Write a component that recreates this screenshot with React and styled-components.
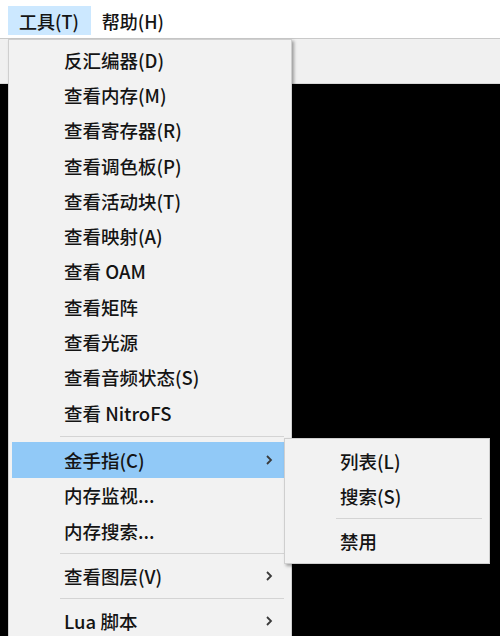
import React from 'react';
import styled, { createGlobalStyle } from 'styled-components';

const GlobalStyle = createGlobalStyle`
  html, body {
    margin: 0;
    padding: 0;
    background: #000;
  }
  * {
    box-sizing: border-box;
  }
`;

const mainItems = [
  { label: '反汇编器(D)' },
  { label: '查看内存(M)' },
  { label: '查看寄存器(R)' },
  { label: '查看调色板(P)' },
  { label: '查看活动块(T)' },
  { label: '查看映射(A)' },
  { label: '查看 OAM' },
  { label: '查看矩阵' },
  { label: '查看光源' },
  { label: '查看音频状态(S)' },
  { label: '查看 NitroFS' },
  { sep: true, first: true },
  { label: '金手指(C)', sub: true, active: true },
  { label: '内存监视...' },
  { label: '内存搜索...' },
  { sep: true },
  { label: '查看图层(V)', sub: true },
  { sep: true },
  { label: 'Lua 脚本', sub: true },
];

const subItems = [
  { label: '列表(L)' },
  { label: '搜索(S)' },
  { sep: true },
  { label: '禁用' },
];

const Chevron = () => (
  <svg width="8" height="12" viewBox="0 0 8 12">
    <polyline
      points="2,2 6,6 2,10"
      fill="none"
      stroke="#3a3a3a"
      strokeWidth="1.8"
    />
  </svg>
);

const App = () => {
  return (
    <>
      <GlobalStyle />
      <Screen>
        <MenuBar>
          <BarItem $open>工具(T)</BarItem>
          <BarItem>帮助(H)</BarItem>
        </MenuBar>
        <ToolStrip />
        <Canvas />

        <Menu $left={8} $top={39} $width={284} $pad={2}>
          {mainItems.map((item, i) =>
            item.sep ? (
              <Separator key={i} $height={item.first ? 12 : 10} />
            ) : (
              <Item key={i} $active={item.active}>
                <span>{item.label}</span>
                {item.sub && (
                  <Arrow>
                    <Chevron />
                  </Arrow>
                )}
              </Item>
            )
          )}
        </Menu>

        <Menu $left={284} $top={438} $width={206} $pad={4}>
          {subItems.map((item, i) =>
            item.sep ? (
              <Separator key={i} $height={10} />
            ) : (
              <Item key={i}>
                <span>{item.label}</span>
              </Item>
            )
          )}
        </Menu>
      </Screen>
    </>
  );
};

const Screen = styled.div`
  position: relative;
  width: 500px;
  height: 636px;
  overflow: hidden;
  display: flex;
  flex-direction: column;
  background: #000;
  font-family: 'Noto Sans CJK SC', 'Microsoft YaHei', sans-serif;
  font-weight: 500;
  color: #141414;
`;

const MenuBar = styled.div`
  height: 39px;
  flex-shrink: 0;
  background: #fff;
  display: flex;
  align-items: flex-start;
  padding: 6px 0 0 8px;
  border-bottom: 1px solid #c9c9c9;
`;

const BarItem = styled.div`
  height: 29px;
  display: flex;
  align-items: center;
  padding: 0 11px 0 10px;
  font-size: 18px;
  background: ${(p) => (p.$open ? '#cce8ff' : 'transparent')};
  border: 1px solid ${(p) => (p.$open ? '#cce8ff' : 'transparent')};
`;

const ToolStrip = styled.div`
  height: 45px;
  flex-shrink: 0;
  background: #f0f0f0;
  border-bottom: 1px solid #d8d8d8;
`;

const Canvas = styled.div`
  flex: 1;
  background: #000;
`;

const Menu = styled.div`
  position: absolute;
  left: ${(p) => p.$left}px;
  top: ${(p) => p.$top}px;
  width: ${(p) => p.$width}px;
  padding: ${(p) => p.$pad}px 3px;
  background: #f2f2f2;
  border: 1px solid #cfcfcf;
  box-shadow: 2px 2px 3px rgba(0, 0, 0, 0.35);
  display: flex;
  flex-direction: column;
`;

const Item = styled.div`
  position: relative;
  height: 35.3px;
  display: flex;
  align-items: center;
  padding-left: 52px;
  font-size: 18.5px;
  white-space: nowrap;
  background: ${(p) => (p.$active ? '#91c9f7' : 'transparent')};
`;

const Arrow = styled.span`
  position: absolute;
  right: 15px;
  top: 50%;
  transform: translateY(-50%);
  display: flex;
`;

const Separator = styled.div`
  height: ${(p) => p.$height}px;
  display: flex;
  align-items: center;
  padding: 0 4px 0 48px;
  &::after {
    content: '';
    flex: 1;
    height: 1px;
    background: #d4d4d4;
  }
`;

export default App;
